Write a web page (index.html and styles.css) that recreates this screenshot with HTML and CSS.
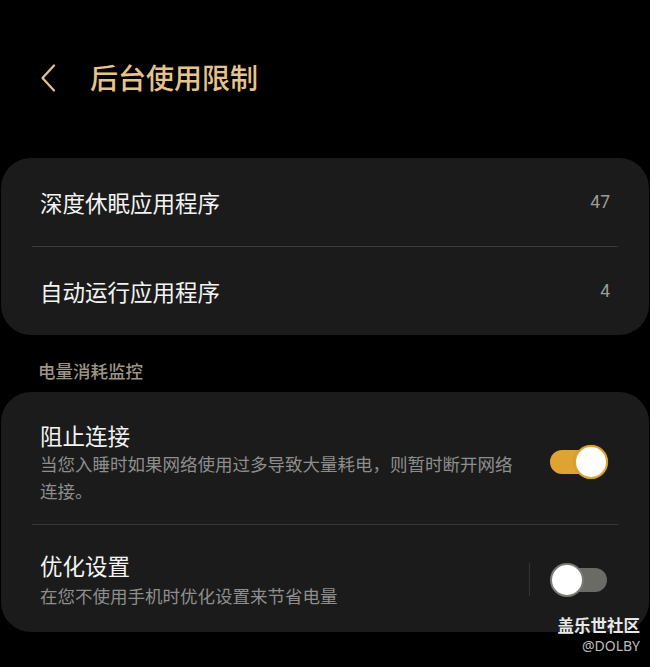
FILE: index.html
```html
<!DOCTYPE html>
<html lang="zh-CN">
<head>
<meta charset="utf-8">
<title>后台使用限制</title>
<link rel="stylesheet" href="styles.css">
</head>
<body>
<div class="screen">
  <header class="appbar">
    <svg class="back" width="16" height="28" viewBox="0 0 16 28"><path d="M14 1.5 L2.5 14 L14 26.5" fill="none" stroke="#e7c38c" stroke-width="2.2" stroke-linecap="round" stroke-linejoin="round"/></svg>
    <h1 class="title">后台使用限制</h1>
  </header>

  <section class="card">
    <div class="row simple">
      <span class="label">深度休眠应用程序</span>
      <span class="count">47</span>
    </div>
    <div class="divider"></div>
    <div class="row simple">
      <span class="label">自动运行应用程序</span>
      <span class="count">4</span>
    </div>
  </section>

  <div class="section-title">电量消耗监控</div>

  <section class="card">
    <div class="row toggle-row first">
      <div class="texts">
        <div class="label">阻止连接</div>
        <div class="desc">当您入睡时如果网络使用过多导致大量耗电，则暂时断开网络连接。</div>
      </div>
      <div class="ctrl">
        <div class="switch on"><span class="track"></span><span class="thumb"></span></div>
      </div>
    </div>
    <div class="divider"></div>
    <div class="row toggle-row second">
      <div class="texts">
        <div class="label">优化设置</div>
        <div class="desc">在您不使用手机时优化设置来节省电量</div>
      </div>
      <div class="ctrl">
        <span class="vline"></span>
        <div class="switch off"><span class="track"></span><span class="thumb"></span></div>
      </div>
    </div>
  </section>

  <div class="watermark">
    <div class="wm-main">盖乐世社区</div>
    <div class="wm-sub">@DOLBY</div>
  </div>
</div>
</body>
</html>
```

FILE: styles.css
```css
html, body {
  margin: 0;
  padding: 0;
  background: #000;
}
body {
  font-family: "Noto Sans CJK SC", "Noto Sans", Roboto, sans-serif;
  color: #f2f2f2;
}
.screen {
  position: relative;
  width: 650px;
  height: 667px;
  overflow: hidden;
}
.appbar {
  display: flex;
  align-items: center;
  height: 38px;
  margin-top: 58px;
  padding-left: 40px;
  margin-bottom: 62px;
}
.back {
  display: block;
  margin-top: 1px;
}
.title {
  margin: 0 0 0 34px;
  font-size: 28px;
  line-height: 38px;
  font-weight: 500;
  color: #e7c38c;
  letter-spacing: 0;
}
.card {
  background: #1b1b1b;
  border-radius: 30px;
  margin: 0 1px;
}
.row {
  display: flex;
  align-items: center;
  padding: 0 39px 0 39px;
}
.row.simple {
  height: 88px;
  justify-content: space-between;
}
.label {
  font-size: 22.5px;
  line-height: 30px;
  color: #f3f3f3;
}
.count {
  font-family: Roboto, "Noto Sans", sans-serif;
  font-size: 17.5px;
  color: #9c9c9c;
}
.divider {
  height: 1px;
  background: #383838;
  margin: 0 31px;
}
.section-title {
  padding: 24px 0 9px 38px;
  font-size: 17.5px;
  line-height: 24px;
  font-weight: 500;
  color: #9d9484;
}
.toggle-row {
  align-items: center;
  padding-right: 42px;
}
.toggle-row.first {
  padding-top: 28px;
  padding-bottom: 20px;
}
.toggle-row.second {
  padding-top: 25px;
  padding-bottom: 23px;
}
.texts {
  width: 481px;
  flex: none;
}
.desc {
  font-size: 17.5px;
  line-height: 27px;
  color: #8e8e8e;
}
.second .desc {
  margin-top: 2px;
}
.ctrl {
  flex: 1;
  display: flex;
  align-items: center;
  justify-content: flex-end;
  gap: 20px;
}
.vline {
  width: 1px;
  height: 33px;
  background: #333;
}
.switch {
  position: relative;
  width: 57px;
  height: 34px;
  flex: none;
}
.switch .track {
  position: absolute;
  left: 0;
  right: 0;
  top: 5px;
  height: 24px;
  border-radius: 12px;
}
.switch .thumb {
  position: absolute;
  top: 0;
  width: 30px;
  height: 30px;
  border-radius: 50%;
  background: #fff;
}
.switch.on .track {
  background: #dfa333;
}
.switch.on .thumb {
  right: -1px;
  border: 2px solid #dfa333;
  box-shadow: 0 0 1px #b07a16;
}
.switch.off .track {
  background: #6b6b66;
  left: 4px;
}
.switch.off .thumb {
  left: 0;
  border: 2px solid #7b7b76;
}
.watermark {
  position: absolute;
  right: 10px;
  top: 614px;
  text-align: right;
}
.wm-main {
  font-size: 16.5px;
  line-height: 22px;
  font-weight: 700;
  color: #e8e8e8;
}
.wm-sub {
  font-family: "Noto Sans", Roboto, sans-serif;
  font-size: 14px;
  line-height: 20px;
  color: #bcbcbc;
}
```
